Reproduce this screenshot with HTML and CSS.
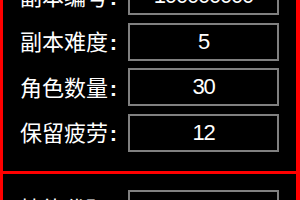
FILE: index.html
```html
<!DOCTYPE html>
<html lang="zh-CN">
<head>
<meta charset="utf-8">
<title>副本设置</title>
<link rel="stylesheet" href="styles.css">
</head>
<body>
<div class="page">
  <section class="group group-main">
    <div class="row">
      <span class="label">副本编号<span class="colon">:</span></span>
      <div class="field">100000000</div>
    </div>
    <div class="row">
      <span class="label">副本难度<span class="colon">:</span></span>
      <div class="field">5</div>
    </div>
    <div class="row">
      <span class="label">角色数量<span class="colon">:</span></span>
      <div class="field">30</div>
    </div>
    <div class="row">
      <span class="label">保留疲劳<span class="colon">:</span></span>
      <div class="field">12</div>
    </div>
  </section>
  <section class="group group-skill">
    <div class="row">
      <span class="label">技能代码<span class="colon">:</span></span>
      <div class="field"></div>
    </div>
  </section>
</div>
</body>
</html>
```
FILE: styles.css
```css
html, body {
  margin: 0;
  padding: 0;
  background: #000;
  overflow: hidden;
}
body {
  width: 300px;
  height: 200px;
  font-family: "Noto Sans CJK SC", "Liberation Sans", sans-serif;
  color: #fff;
}
.page {
  margin-top: -42px;
}
.group {
  border-left: 3px solid #ff0000;
  border-right: 4px solid #ff0000;
  border-top: 3px solid #ff0000;
  display: flex;
  flex-direction: column;
  gap: 7.5px;
  padding: 16px 17px 19px 17px;
}
.row {
  display: flex;
  align-items: center;
  height: 38px;
}
.label {
  width: 108px;
  flex: none;
  padding-left: 0;
  font-size: 22px;
  line-height: 22px;
  white-space: nowrap;
  letter-spacing: 0;
}
.colon {
  display: inline-block;
  width: 11px;
  text-align: center;
  font-family: "Liberation Sans", sans-serif;
  font-weight: bold;
}
.field {
  box-sizing: border-box;
  width: 151px;
  height: 38px;
  flex: none;
  border: 2px solid #808080;
  background: #000;
  display: flex;
  align-items: center;
  justify-content: center;
  font-family: "Liberation Sans", sans-serif;
  font-size: 22px;
  letter-spacing: -1.2px;
  line-height: 1;
  color: #fff;
}
```
